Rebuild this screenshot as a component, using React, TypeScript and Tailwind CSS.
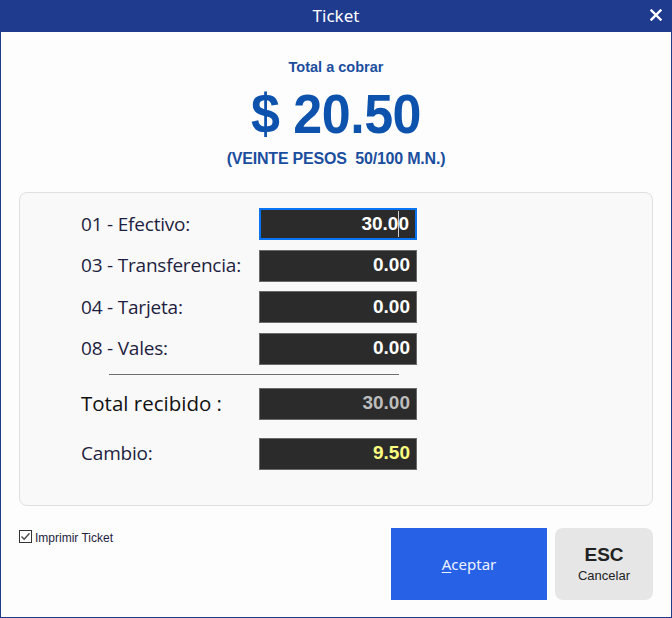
import * as React from "react";

const rows = [
  { label: "01 - Efectivo:", value: "30.00", focused: true },
  { label: "03 - Transferencia:", value: "0.00" },
  { label: "04 - Tarjeta:", value: "0.00" },
  { label: "08 - Vales:", value: "0.00" },
];

function Field({ value, focused, tone = "text-white" }: { value: string; focused?: boolean; tone?: string }) {
  return (
    <div
      className={
        "w-[158px] h-[32px] bg-[#2b2b2b] flex items-center justify-end pr-[6px] font-['Liberation_Sans',Arial,sans-serif] font-bold text-[19px] " +
        tone +
        (focused ? " border-2 border-[#0a74f5]" : " border border-[#6a6a6a]")
      }
    >
      {focused ? (
        <span className="relative">
          30.0
          <span className="absolute top-[1px] bottom-[1px] w-px bg-[#cfcfcf]" />
          0
        </span>
      ) : (
        value
      )}
    </div>
  );
}

export default function App() {
  return (
    <div className="w-[672px] h-[618px] flex flex-col bg-[#fdfdfd] border-x border-b border-[#1f3b8e] font-['Open_Sans',sans-serif]">
      {/* title bar */}
      <div className="h-[32px] -mx-px bg-[#1f3b8e] text-white flex items-center justify-center relative shrink-0">
        <span className="text-[17px] font-['Noto_Sans',sans-serif]">Ticket</span>
        <svg className="absolute right-[10px] top-[9px]" width="12" height="12" viewBox="0 0 12 12">
          <path d="M1.5 1.5 L10.5 10.5 M10.5 1.5 L1.5 10.5" stroke="white" strokeWidth="2.4" strokeLinecap="square" />
        </svg>
      </div>

      {/* amount */}
      <div className="flex flex-col items-center text-[#0d52ad] font-['Liberation_Sans',Arial,sans-serif] font-bold pt-[26px]">
        <div className="text-[14.5px] leading-[18px] text-[#1b4e9e]">Total a cobrar</div>
        <div className="text-[52px] leading-[58px] mt-[9px] tracking-[-0.5px] scale-y-[1.06]">$ 20.50</div>
        <div className="text-[16px] leading-[20px] mt-[6px] whitespace-pre text-[#1b4e9e] tracking-[-0.2px]">(VEINTE PESOS  50/100 M.N.)</div>
      </div>

      {/* payment panel */}
      <div className="mx-[18px] mt-[23px] h-[314px] rounded-[8px] border border-[#e0e0e0] bg-[#f9f9f9] pt-[15px] pl-[61px]">
        <div className="flex flex-col gap-[9.5px]">
          {rows.map((r) => (
            <div key={r.label} className="flex items-center">
              <div className="w-[178px] text-[19px] text-[#1e1e40] tracking-[-0.2px]">{r.label}</div>
              <Field value={r.value} focused={r.focused} />
            </div>
          ))}
        </div>
        <div className="ml-[28px] mt-[9px] w-[290px] h-px bg-[#707070]" />
        <div className="flex items-center mt-[13px]">
          <div className="w-[178px] text-[20.5px] text-[#111]">Total recibido :</div>
          <Field value="30.00" tone="text-[#bdbdbd]" />
        </div>
        <div className="flex items-center mt-[18px]">
          <div className="w-[178px] text-[19px] text-[#1e1e40] tracking-[-0.2px]">Cambio:</div>
          <Field value="9.50" tone="text-[#ffff80]" />
        </div>
      </div>

      {/* footer */}
      <div className="flex mt-[22px] pl-[18px] pr-[18px]">
        <label className="flex items-start gap-[3px] text-[12px] text-[#1e1e40] font-['Liberation_Sans',Arial,sans-serif] flex-1 pt-[1px]">
          <span className="w-[13px] h-[13px] border border-[#333] bg-white flex items-center justify-center mt-px">
            <svg width="11" height="11" viewBox="0 0 11 11">
              <path d="M1.5 5.5 L4.2 8.3 L9.5 2.2" fill="none" stroke="#444" strokeWidth="1.3" />
            </svg>
          </span>
          Imprimir Ticket
        </label>
        <button className="w-[156px] h-[72px] bg-[#2762e6] text-[#eef2ff] text-[15px] font-['Noto_Sans',sans-serif]">
          <span className="underline underline-offset-2">A</span>ceptar
        </button>
        <button className="ml-[8px] w-[98px] h-[72px] rounded-[8px] bg-[#e6e6e6] flex flex-col items-center justify-center font-['Liberation_Sans',Arial,sans-serif] text-[#222]">
          <span className="text-[19px] font-bold leading-[22px]">ESC</span>
          <span className="text-[13px] leading-[16px] mt-[2px]">Cancelar</span>
        </button>
      </div>
    </div>
  );
}
